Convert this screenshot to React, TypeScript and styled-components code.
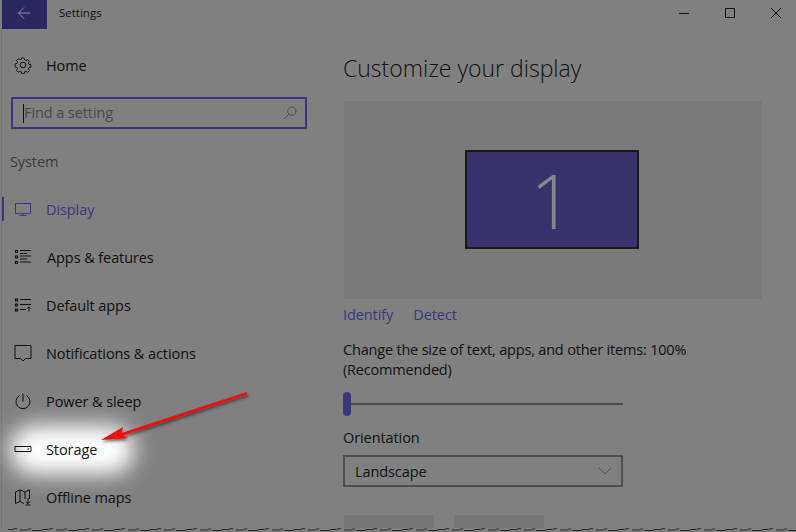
import React from "react";
import styled, { createGlobalStyle } from "styled-components";

const GlobalStyle = createGlobalStyle`
  html, body {
    margin: 0;
    padding: 0;
    background: #808080;
  }
  * { box-sizing: border-box; }
`;

const FONT = `"Open Sans", "Noto Sans", "Liberation Sans", sans-serif`;
const ACCENT = "#3a3680";

const Window = styled.div`
  position: relative;
  width: 796px;
  height: 532px;
  overflow: hidden;
  background: #808080;
  color: #111;
  font-family: ${FONT};
  font-size: 14.5px;
`;

const TitleBar = styled.header`
  display: flex;
  align-items: center;
  height: 29px;
  padding-left: 2px;
`;

const BackButton = styled.div`
  display: flex;
  align-items: center;
  justify-content: center;
  width: 45px;
  height: 29px;
  background: #2b2760;
  padding: 0 2px 3px 0;
`;

const AppName = styled.span`
  margin: 0 0 4px 12px;
  font-size: 11.5px;
  color: #111;
`;

const WindowControls = styled.div`
  display: flex;
  align-items: center;
  margin: 0 0 3px auto;
  gap: 34px;
  padding-right: 14px;
`;

const Body = styled.div`
  display: flex;
`;

const Sidebar = styled.nav`
  position: relative;
  width: 330px;
  padding-top: 12px;
  border-left: 1px solid #767676;
  margin-left: 1px;
`;

const Spotlight = styled.div`
  position: absolute;
  left: 12px;
  top: 401px;
  width: 116px;
  height: 40px;
  border-radius: 20px;
  background: #fff;
  box-shadow: 0 0 10px 4px #fff;
  filter: blur(10px);
`;

const NavRow = styled.div<{ $active?: boolean; $textShift?: number }>`
  position: relative;
  display: flex;
  align-items: center;
  height: 48px;
  padding-left: 12px;
  color: ${(p) => (p.$active ? ACCENT : "#111")};

  svg {
    flex: none;
    width: 18px;
    height: 18px;
  }

  span {
    margin-left: ${(p) => 14 + (p.$textShift ?? 0)}px;
    letter-spacing: -0.09px;
  }

  ${(p) =>
    p.$active &&
    `&::before {
      content: "";
      position: absolute;
      left: 0;
      top: 12px;
      width: 2px;
      height: 24px;
      background: ${ACCENT};
    }`}
`;

const SearchBox = styled.div`
  display: flex;
  align-items: center;
  justify-content: space-between;
  width: 296px;
  height: 32px;
  margin: 8px 0 8px 9px;
  padding: 0 8px 0 10px;
  border: 2px solid ${ACCENT};
  color: #4a4a4a;
  letter-spacing: -0.09px;
`;

const Caret = styled.i`
  display: inline-block;
  width: 1px;
  height: 19px;
  background: #111;
  vertical-align: -5px;
`;

const SectionLabel = styled.div`
  display: flex;
  align-items: center;
  height: 48px;
  padding-left: 8px;
  color: #3a3a3a;
  letter-spacing: -0.09px;
`;

const Main = styled.main`
  flex: 1;
  padding: 22px 34px 0 12px;
`;

const Heading = styled.h1`
  margin: 0;
  height: 50px;
  font-size: 23px;
  font-weight: 300;
  line-height: 34px;
  color: #111;
`;

const Preview = styled.div`
  display: flex;
  align-items: center;
  justify-content: center;
  width: 418px;
  height: 198px;
  margin-left: 1px;
  padding: 0 2px 2px 0;
  background: #7a7a7a;
`;

const Monitor = styled.div`
  display: flex;
  align-items: center;
  justify-content: center;
  width: 174px;
  height: 99px;
  background: #38336c;
  border: 2px solid #1a1a1a;
  color: #888;
  font-size: 76px;
  font-weight: 300;
`;

const Links = styled.div`
  display: flex;
  gap: 20px;
  height: 30px;
  margin-bottom: 11px;
  padding-top: 4px;
  line-height: 24px;
  letter-spacing: -0.09px;
  color: ${ACCENT};
`;

const Description = styled.p`
  margin: 0;
  width: 360px;
  line-height: 20px;
  letter-spacing: -0.19px;
`;

const Slider = styled.div`
  position: relative;
  width: 280px;
  height: 24px;
  margin-top: 12px;
  display: flex;
  align-items: center;

  &::before {
    content: "";
    width: 100%;
    height: 2px;
    background: #4a4a4a;
  }
`;

const Thumb = styled.div`
  position: absolute;
  left: 0;
  top: 0;
  width: 8px;
  height: 24px;
  border-radius: 4px;
  background: ${ACCENT};
`;

const FieldLabel = styled.div`
  margin-top: 10px;
  height: 24px;
  line-height: 24px;
  letter-spacing: -0.09px;
`;

const Select = styled.div`
  display: flex;
  align-items: center;
  justify-content: space-between;
  width: 280px;
  height: 32px;
  margin-top: 5px;
  padding: 0 9px 0 10px;
  border: 2px solid #505050;
  letter-spacing: -0.09px;
`;

const ButtonRow = styled.div`
  display: flex;
  gap: 20px;
  margin: 28px 0 0 1px;
`;

const GhostButton = styled.div`
  width: 90px;
  height: 13px;
  background: #767676;
`;

const TornEdge = styled.svg`
  position: absolute;
  left: 0;
  bottom: 0;
  width: 796px;
  height: 6px;
`;

const ArrowLayer = styled.svg`
  position: absolute;
  left: 90px;
  top: 385px;
  width: 170px;
  height: 70px;
  overflow: visible;
`;

const Icon = ({ children }: { children: React.ReactNode }) => (
  <svg viewBox="0 0 18 18" fill="none" stroke="currentColor" strokeWidth="1">
    {children}
  </svg>
);

const GearIcon = () => (
  <Icon>
    <circle cx="9" cy="9" r="2.8" />
    <path d="M7.6 1.2h2.8l.4 2.2 1.5.7 1.9-1.2 2 2-1.2 1.9.6 1.5 2.2.4v2.6l-2.2.4-.6 1.5 1.2 1.9-2 2-1.9-1.2-1.5.7-.4 2.1H7.6l-.4-2.1-1.5-.7-1.9 1.2-2-2 1.2-1.9-.6-1.5-2.2-.4V7.7l2.2-.4.6-1.5-1.2-1.9 2-2 1.9 1.2 1.5-.7z" transform="translate(.9 .9) scale(.9)" />
  </Icon>
);

const DisplayIcon = () => (
  <Icon>
    <path d="M1.5 3.5h15v10h-15zM9 13.5v2M5.5 15.5h7" />
  </Icon>
);

const AppsIcon = () => (
  <Icon>
    <path d="M1.5 2.5h2v2h-2zM1.5 8h2v2h-2zM1.5 13.5h2v2h-2z" strokeWidth="1.2" />
    <path d="M6 2.5h11M6 5.5h7M6 8h11M6 11h7M6 14h11" />
  </Icon>
);

const DefaultAppsIcon = () => (
  <Icon>
    <path d="M1.5 3h2v2h-2zM1.5 8h2v2h-2zM1.5 13h2v2h-2z" strokeWidth="1.2" />
    <path d="M6 3.5h11M6 8.5h11M6 13.5h6M15 15.5v-4.5M13.2 12.6 15 10.8l1.8 1.8" />
  </Icon>
);

const NotificationIcon = () => (
  <Icon>
    <path d="M1 1.5h16v13h-5.5L9 17l-2.5-2.5H1z" />
  </Icon>
);

const PowerIcon = () => (
  <Icon>
    <path d="M9 1.5v8M5.5 3.6a7 7 0 1 0 7 0" />
  </Icon>
);

const StorageIcon = () => (
  <Icon>
    <path d="M1 6.5h16v5H1z" />
    <path d="M13.5 9h1.6" strokeWidth="1.2" />
  </Icon>
);

const MapIcon = () => (
  <Icon>
    <path d="M1.5 4 6 1.8l5 2.2 4.5-2.2v9M1.5 4v11.5L6 13.5l4 2M6 1.8v11.7M11 4v7" />
    <path d="M14 10v5.5M11.8 13.5l2.2 2.2 2.2-2.2M11.5 17h5" />
  </Icon>
);

// small rough seam where the screenshot was cut off
const tornPath = Array.from({ length: 66 })
  .map((_, i) => {
    const x = 8 + i * 12;
    const y = 3.5 + ((i * 7) % 3) * 0.5;
    return `M${x} ${y}h${5 + (i % 3) * 2}l2 -1h2`;
  })
  .join(" ");

const navItems = [
  { label: "Display", icon: <DisplayIcon />, active: true },
  { label: "Apps & features", icon: <AppsIcon />, shift: 1 },
  { label: "Default apps", icon: <DefaultAppsIcon /> },
  { label: "Notifications & actions", icon: <NotificationIcon /> },
  { label: "Power & sleep", icon: <PowerIcon /> },
  { label: "Storage", icon: <StorageIcon /> },
  { label: "Offline maps", icon: <MapIcon /> },
];

export default function App() {
  return (
    <Window>
      <GlobalStyle />
      <TitleBar>
        <BackButton>
          <svg width="14" height="14" viewBox="0 0 14 14" fill="none" stroke="#8c8c8c" strokeWidth="1">
            <path d="M13 7H1.5M7 1.5 1.5 7 7 12.5" />
          </svg>
        </BackButton>
        <AppName>Settings</AppName>
        <WindowControls>
          <svg width="12" height="12" viewBox="0 0 12 12" fill="none" stroke="#111" strokeWidth="1">
            <path d="M1 6.5h10" />
          </svg>
          <svg width="12" height="12" viewBox="0 0 12 12" fill="none" stroke="#111" strokeWidth="1">
            <path d="M1.5 1.5h9v9h-9z" />
          </svg>
          <svg width="12" height="12" viewBox="0 0 12 12" fill="none" stroke="#111" strokeWidth="1">
            <path d="M1 1l10 10M11 1 1 11" />
          </svg>
        </WindowControls>
      </TitleBar>
      <Body>
        <Sidebar>
          <Spotlight />
          <NavRow>
            <GearIcon />
            <span>Home</span>
          </NavRow>
          <SearchBox>
            <div>
              <Caret />
              Find a setting
            </div>
            <svg width="14" height="14" viewBox="0 0 14 14" fill="none" stroke="#4f4f4f" strokeWidth="1">
              <circle cx="8.8" cy="5.2" r="4.2" />
              <path d="M5.8 8.2 1 13" />
            </svg>
          </SearchBox>
          <SectionLabel>System</SectionLabel>
          {navItems.map((item) => (
            <NavRow key={item.label} $active={item.active} $textShift={item.shift}>
              {item.icon}
              <span>{item.label}</span>
            </NavRow>
          ))}
        </Sidebar>
        <Main>
          <Heading>Customize your display</Heading>
          <Preview>
            <Monitor>1</Monitor>
          </Preview>
          <Links>
            <span>Identify</span>
            <span>Detect</span>
          </Links>
          <Description>Change the size of text, apps, and other items: 100% (Recommended)</Description>
          <Slider>
            <Thumb />
          </Slider>
          <FieldLabel>Orientation</FieldLabel>
          <Select>
            Landscape
            <svg width="14" height="8" viewBox="0 0 14 8" fill="none" stroke="#4f4f4f" strokeWidth="1">
              <path d="M1 1l6 6 6-6" />
            </svg>
          </Select>
          <ButtonRow>
            <GhostButton />
            <GhostButton />
          </ButtonRow>
        </Main>
      </Body>
      <ArrowLayer viewBox="0 0 170 70">
        <defs>
          <filter id="arrowShadow" x="-10%" y="-30%" width="120%" height="170%">
            <feDropShadow dx="1" dy="2" stdDeviation="1.6" floodColor="#000" floodOpacity="0.55" />
          </filter>
        </defs>
        <path
          d="M11 55 33 42 31.5 48 156.5 7 157.5 9.5 33 50.5 38 53z"
          fill="#f20a0a"
          filter="url(#arrowShadow)"
        />
      </ArrowLayer>
      <TornEdge viewBox="0 0 796 6">
        <path d={tornPath} fill="none" stroke="#2a2a2a" strokeWidth="1" />
      </TornEdge>
    </Window>
  );
}
